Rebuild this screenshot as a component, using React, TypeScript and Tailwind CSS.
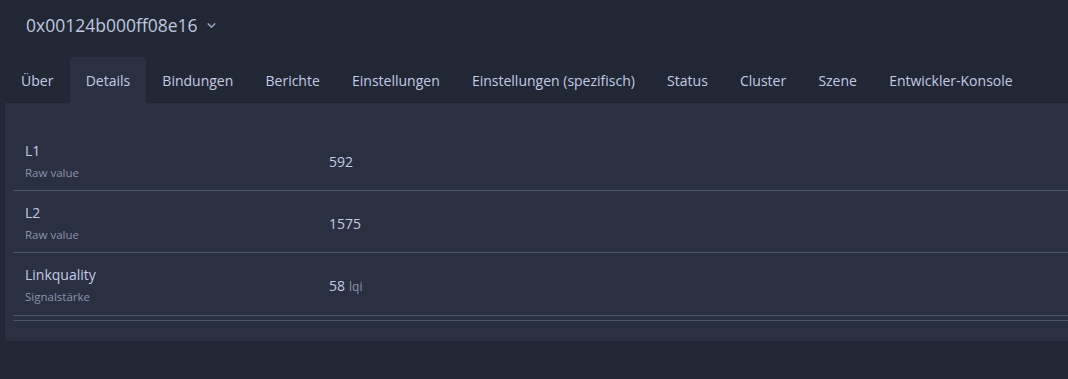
import { ChevronDown } from "lucide-react";

const tabs = [
  "Über",
  "Details",
  "Bindungen",
  "Berichte",
  "Einstellungen",
  "Einstellungen (spezifisch)",
  "Status",
  "Cluster",
  "Szene",
  "Entwickler-Konsole",
];

const rows = [
  { name: "L1", desc: "Raw value", value: "592", unit: "" },
  { name: "L2", desc: "Raw value", value: "1575", unit: "" },
  { name: "Linkquality", desc: "Signalstärke", value: "58", unit: "lqi" },
];

export default function App() {
  return (
    <div className="min-h-[379px] w-full overflow-hidden bg-[#222736] font-['Open_Sans',sans-serif] text-[#c3cbe4]">
      {/* Kopf mit Geräte-ID */}
      <div className="flex items-start gap-[7px] pl-[26px] pt-[13px] h-[57px]">
        <span className="text-[17.5px] leading-6 text-[#bfc7df]">0x00124b000ff08e16</span>
        <ChevronDown size={13} strokeWidth={3} className="mt-[6px] text-[#8f98b3]" />
      </div>

      {/* Reiter */}
      <div className="flex pl-[5px]">
        {tabs.map((t) => (
          <div
            key={t}
            className={`px-[16.1px] h-[46px] flex items-center text-[14px] whitespace-nowrap rounded-t ${
              t === "Details" ? "bg-[#2a3042] text-[#c3cbe4]" : "text-[#c3cbe4]"
            }`}
          >
            {t}
          </div>
        ))}
      </div>

      {/* Karte */}
      <div className="ml-[5px] mr-[-20px] bg-[#2a3042] pt-[26px] pb-5 px-2 rounded-bl">
        <table className="w-full border-collapse">
          <tbody>
            {rows.map((r, i) => (
              <tr key={r.name} className="border-b border-[#4d5366]">
                <td className={`w-[304px] px-3 pt-[10px] align-middle ${i === 2 ? "pb-[10px]" : "pb-[9px]"}`}>
                  <div className="text-[14px] leading-6 text-[#c3cbe4]">{r.name}</div>
                  <div className="mt-[2px] text-[11.5px] leading-4 text-[#8a93ad]">{r.desc}</div>
                </td>
                <td className="px-3 pt-[12px] pb-[9px] align-middle text-[14px] text-[#c3cbe4]">
                  {r.value}
                  {r.unit && <span className="ml-1 text-[12px] text-[#8a93ad]">{r.unit}</span>}
                </td>
              </tr>
            ))}
          </tbody>
        </table>
        <div className="mt-1 border-t border-[#4d5366]" />
      </div>
    </div>
  );
}
